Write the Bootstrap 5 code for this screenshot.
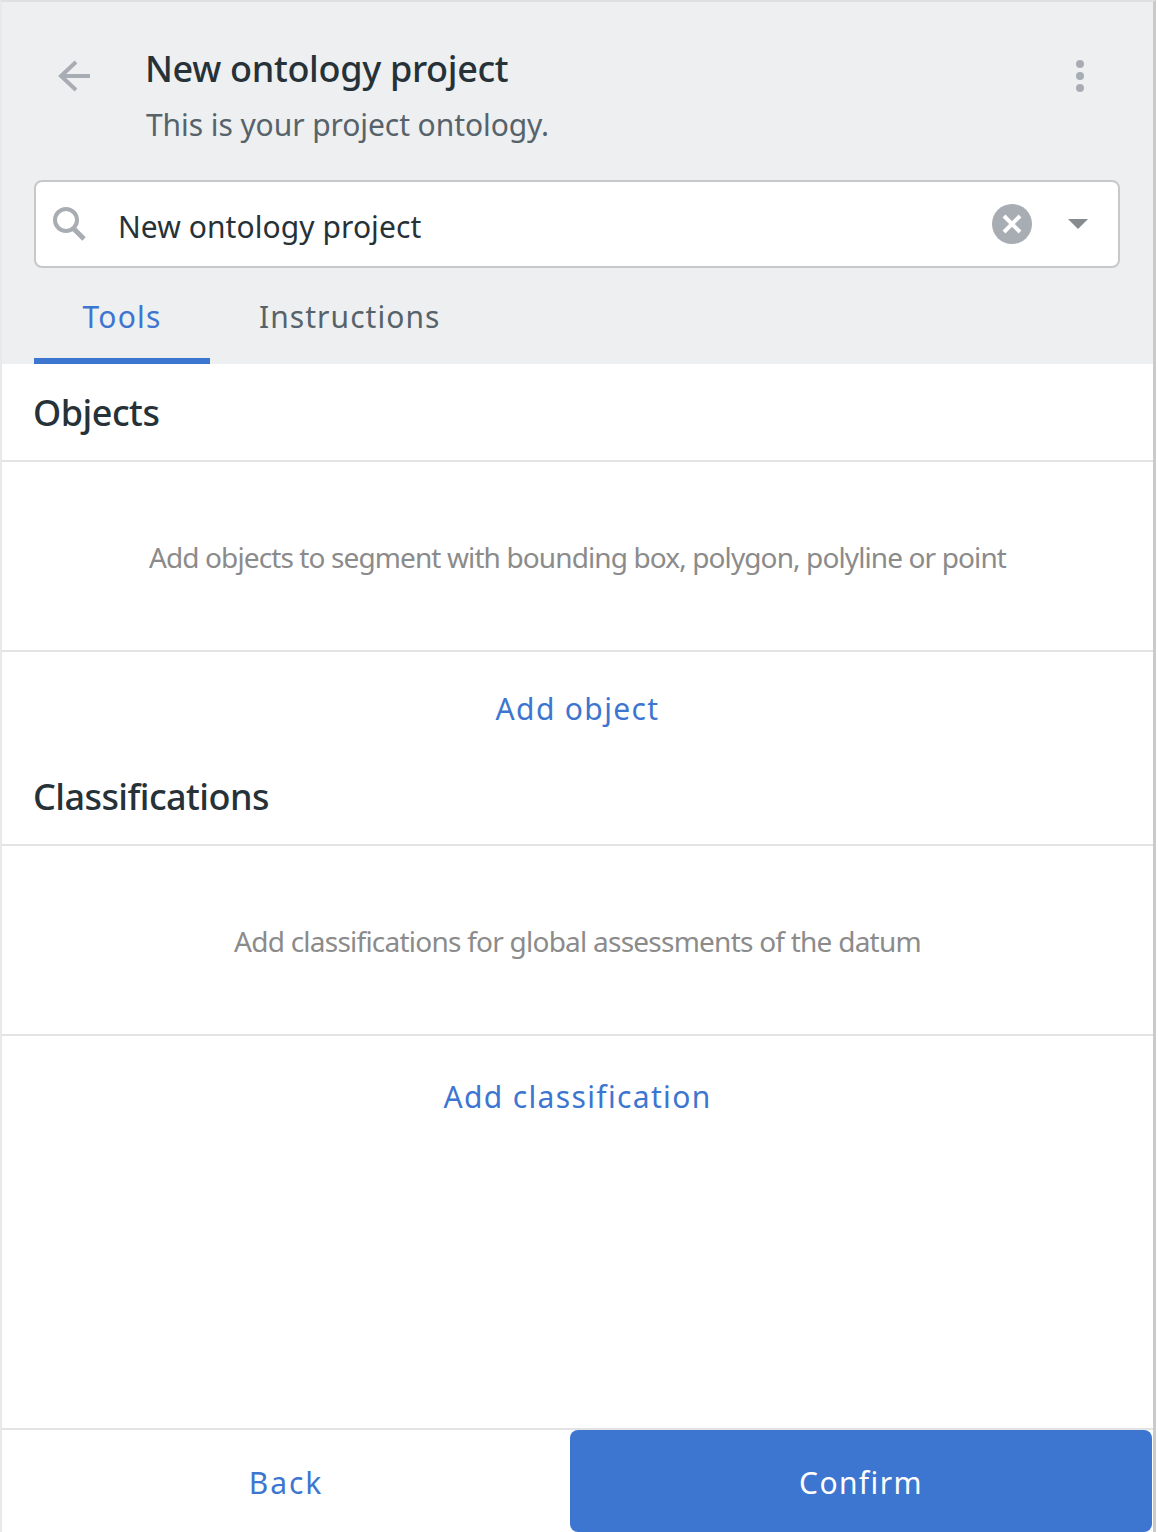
<!doctype html>
<html lang="en"><head><meta charset="utf-8"><title>Ontology</title>
<link rel="stylesheet" href="https://cdn.jsdelivr.net/npm/bootstrap@5.3.0/dist/css/bootstrap.min.css">
<style>
html,body{height:100%;margin:0;background:#fff;}
body{font-family:"Noto Sans","Open Sans",sans-serif;}
.shell{width:1156px;height:1532px;border-top:2px solid #dfe0e2;border-left:2px solid #e8e9ea;border-right:3px solid #c9cacc;overflow:hidden;}
.head-zone{background:#eeeff1;height:362px;padding-left:32px;padding-right:33px;}
.head-top{height:178px;}
.back-wrap{width:112px;padding:57px 0 0 24px;}
.head-text{padding-top:45px;}
.title-main{font-size:36px;line-height:44px;font-weight:500;color:#263238;letter-spacing:-.32px;margin:0 0 0 -1px;}
.title-sub{font-size:30px;line-height:44px;color:#56636b;letter-spacing:-.08px;margin:12px 0 0;}
.more-wrap{width:45px;padding-top:57px;}
.search-box{height:88px;background:#fff;border:2px solid #c6c8ca;border-radius:8px;padding:0 30px 0 16px;}
.search-text{font-size:30px;color:#263238;letter-spacing:.07px;margin-left:32px;line-height:88px;padding-top:5px;}
.arrow-gap{margin-left:36px;}
.tab-strip{height:96px;}
.tab-item{font-size:30px;line-height:36px;height:96px;padding:8px 0 0;border:0;border-bottom:6px solid transparent;background:none;color:#56636b;}
.tab-on{width:176px;text-align:center;color:#3d76d0;border-bottom-color:#3d76d0;letter-spacing:1.2px;}
.tab-off{margin-left:49px;letter-spacing:1.05px;}
.sect-head{height:98px;border-bottom:2px solid #e2e3e4;padding:0 31px;font-size:36px;font-weight:500;color:#263238;letter-spacing:-.5px;line-height:98px;}
.sect-head-tight{height:100px;line-height:94px;padding-top:4px;letter-spacing:-.56px;}
.sect-note{height:190px;border-bottom:2px solid #e2e3e4;font-size:28px;color:#8b8b8b;letter-spacing:-.89px;padding-top:1px;}
.sect-note-wide{letter-spacing:-.76px;}
.add-link{height:94px;font-size:30px;color:#3d76d0;letter-spacing:1.35px;padding:18px 0 0;border:0;background:none;}
.add-link-low{padding-top:26px;}
.gap-fill{height:298px;}
.foot-bar{height:104px;border-top:2px solid #e2e3e4;}
.foot-back{width:568px;font-size:30px;color:#3d76d0;letter-spacing:1.9px;border:0;background:none;padding:2px 0 0;}
.foot-ok{width:582px;font-size:30px;color:#fff;background:#3d76d0;border:0;border-radius:8px;letter-spacing:1.4px;padding:2px 0 0;}
</style></head><body>
<div class="shell d-flex flex-column">
<div class="head-zone">
 <div class="head-top d-flex">
  <div class="back-wrap"><svg width="32" height="34" viewBox="0 0 32 34" fill="none" stroke="#a7adb3" stroke-width="4"><path d="M32 17H4M18 3 3 17l15 14"/></svg></div>
  <div class="head-text flex-grow-1"><h1 class="title-main">New ontology project</h1><p class="title-sub">This is your project ontology.</p></div>
  <div class="more-wrap"><svg width="10" height="34" viewBox="0 0 10 34" fill="#a7adb3"><circle cx="5" cy="5" r="4"/><circle cx="5" cy="17" r="4"/><circle cx="5" cy="29" r="4"/></svg></div>
 </div>
 <div class="search-box d-flex align-items-center">
  <svg width="34" height="36" viewBox="0 0 34 36" fill="none" stroke="#a7adb3"><circle cx="14" cy="14" r="11" stroke-width="4"/><path d="M21 22l11 11" stroke-width="5"/></svg>
  <div class="search-text flex-grow-1">New ontology project</div>
  <svg width="40" height="40" viewBox="0 0 40 40"><circle cx="20" cy="20" r="20" fill="#a7adb3"/><path d="M12 12l16 16M28 12 12 28" stroke="#fff" stroke-width="4"/></svg>
  <svg class="arrow-gap" width="20" height="10" viewBox="0 0 20 10" fill="#868b8f"><path d="M0 0h20L10 10z"/></svg>
 </div>
 <div class="tab-strip d-flex">
  <button class="tab-item tab-on" type="button">Tools</button>
  <button class="tab-item tab-off" type="button">Instructions</button>
 </div>
</div>
<div class="sect-head">Objects</div>
<div class="sect-note d-flex align-items-center justify-content-center">Add objects to segment with bounding box, polygon, polyline or point</div>
<button class="add-link w-100 d-flex align-items-center justify-content-center" type="button">Add object</button>
<div class="sect-head sect-head-tight">Classifications</div>
<div class="sect-note sect-note-wide d-flex align-items-center justify-content-center">Add classifications for global assessments of the datum</div>
<button class="add-link add-link-low w-100 d-flex align-items-center justify-content-center" type="button">Add classification</button>
<div class="gap-fill"></div>
<div class="foot-bar d-flex">
 <button class="foot-back" type="button">Back</button>
 <button class="foot-ok" type="button">Confirm</button>
</div>
</div>
</body></html>
